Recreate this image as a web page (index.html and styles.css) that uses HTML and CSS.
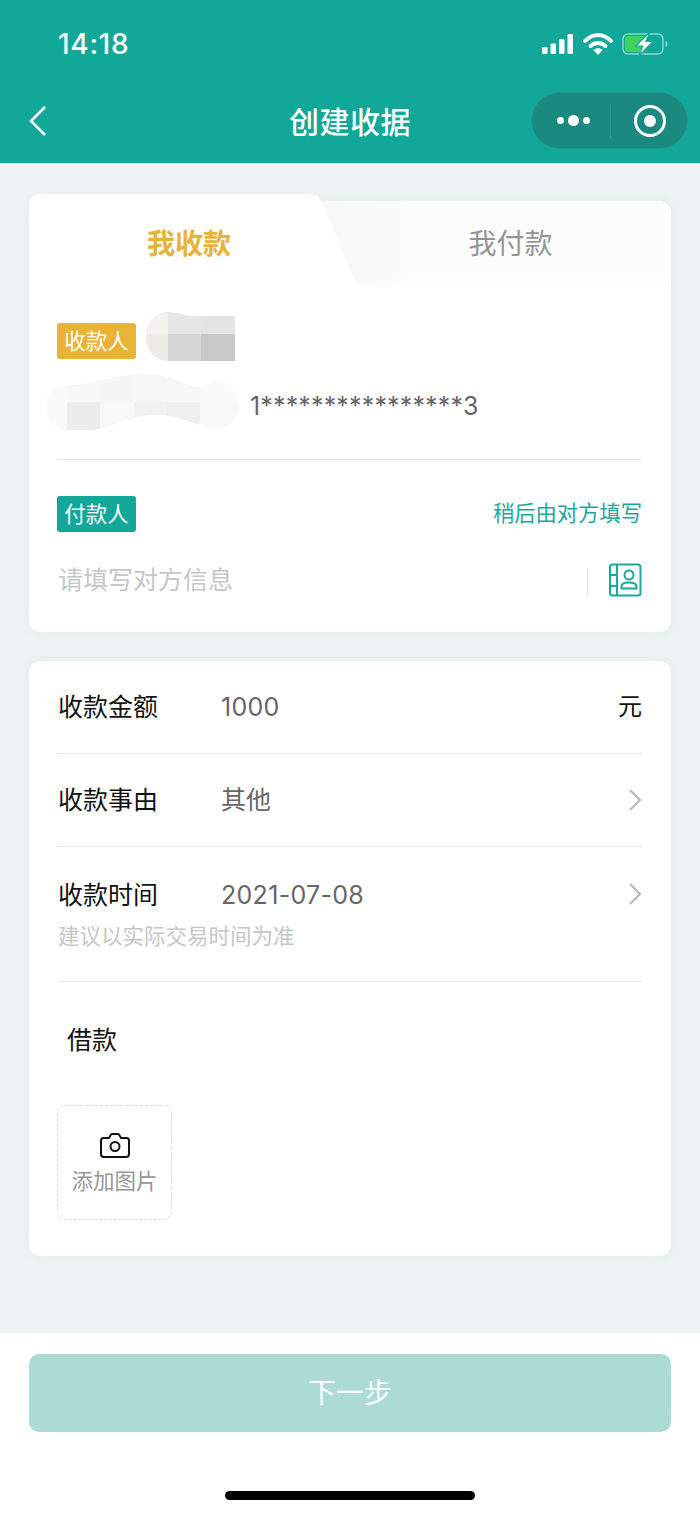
FILE: index.html
```html
<!DOCTYPE html>
<html lang="zh">
<head>
<meta charset="utf-8">
<title>创建收据</title>
<link rel="stylesheet" href="styles.css">
</head>
<body>
<div class="page">
  <header class="header">
    <div class="status">
      <span class="time">14:18</span>
      <div class="status-icons">
        <svg width="32" height="22" viewBox="0 0 32 22"><g fill="#fff"><rect x="0" y="14" width="5.500" height="7" rx="1.200"/><rect x="8.500" y="10.500" width="5.500" height="10.500" rx="1.200"/><rect x="17" y="6" width="5.500" height="15" rx="1.200"/><rect x="25.500" y="1" width="5.500" height="20" rx="1.200"/></g></svg>
        <svg width="30" height="24" viewBox="0 0 30 24"><path d="M2 9C10 1 20 1 28 9" fill="none" stroke="#fff" stroke-width="3.800" stroke-linecap="round"/><path d="M7.500 14C12 10 18 10 22.500 14" fill="none" stroke="#fff" stroke-width="3.800" stroke-linecap="round"/><path d="M10.500 18C13.500 15.500 16.500 15.500 19.500 18L15 23Z" fill="#fff"/></svg>
        <svg width="46" height="24" viewBox="0 0 46 24"><rect x="1" y="2" width="40" height="20" rx="5" fill="none" stroke="#8fd6cd" stroke-width="1.500"/><rect x="3" y="4" width="21" height="16" rx="3" fill="#3cd25c"/><path d="M43.500 9v6c1.500-.5 2-1.500 2-3s-.5-2.500-2-3Z" fill="#8fd6cd"/><path d="M28 0 13.500 14H20.500L17 24 31 9.500H24Z" fill="#fff" stroke="#11a899" stroke-width="1.200"/></svg>
      </div>
    </div>
    <div class="nav">
      <svg class="back" width="20" height="32" viewBox="0 0 20 32"><path d="M17 2 3 16l14 14" fill="none" stroke="#fff" stroke-width="2.600"/></svg>
      <h1 class="title">创建收据</h1>
      <div class="capsule">
        <div class="capsule-dots"><i class="dot"></i><i class="dot dot-big"></i><i class="dot"></i></div>
        <i class="capsule-line"></i>
        <div class="capsule-target"><i class="target-core"></i></div>
      </div>
    </div>
  </header>

  <main class="content">
    <section class="card parties">
      <div class="tabs">
        <div class="tab tab-on">我收款</div>
        <div class="tab tab-off">我付款</div>
      </div>
      <svg class="active-tab" width="380" height="94" viewBox="0 0 380 94">
        <defs><linearGradient id="tabfade" x1="0" y1="0" x2="1" y2="0"><stop offset="0" stop-color="#e9e9e4" stop-opacity=".25"/><stop offset="1" stop-color="#e9e9e4" stop-opacity="0"/></linearGradient></defs>
        <path d="M293 7H380V94H328Z" fill="url(#tabfade)"/>
        <path d="M0 94V12Q0 0 12 0H280Q290 0 293 9L325 86Q328 93 334 94Z" fill="#fff"/>
      </svg>
      <div class="party party-top">
        <div class="party-head">
          <span class="tag tag-gold">收款人</span>
          <svg class="blur blur-name" width="90" height="50" viewBox="0 0 90 50">
            <defs><clipPath id="clipname"><path d="M0 24C0 8 10 0 22 0C32 0 38 4 48 4H89V49H22C10 49 0 40 0 24Z"/></clipPath></defs>
            <g clip-path="url(#clipname)">
              <rect x="0" y="0" width="22" height="22" fill="#f3f2ee"/><rect x="22" y="0" width="33" height="22" fill="#e6e6e6"/><rect x="55" y="0" width="34" height="22" fill="#e4e4e4"/>
              <rect x="0" y="22" width="22" height="27" fill="#edebe6"/><rect x="22" y="22" width="33" height="27" fill="#d6d6d6"/><rect x="55" y="22" width="34" height="27" fill="#c9c9c9"/>
            </g>
          </svg>
        </div>
        <div class="party-account">
          <svg class="blur blur-long" width="195" height="57" viewBox="0 0 195 57">
            <defs><clipPath id="cliplong"><path d="M0 34C0 18 10 11 24 11C50 11 68 0 100 0C130 0 140 13 155 13C165 8 172 8 176 8C186 8 194 20 194 32C194 46 184 54 172 54C152 54 140 41 110 41C80 41 70 56 44 56H24C10 56 0 48 0 34Z"/></clipPath></defs>
            <g clip-path="url(#cliplong)">
              <rect x="0" y="0" width="22" height="28" fill="#fbfbfb"/><rect x="22" y="0" width="33" height="28" fill="#f7f7f7"/><rect x="55" y="0" width="34" height="28" fill="#f5f5f5"/><rect x="89" y="0" width="33" height="28" fill="#f6f6f6"/><rect x="122" y="0" width="33" height="28" fill="#f7f7f7"/><rect x="155" y="0" width="40" height="28" fill="#fafafa"/>
              <rect x="0" y="28" width="22" height="29" fill="#fbfbfb"/><rect x="22" y="28" width="33" height="29" fill="#ececec"/><rect x="55" y="28" width="34" height="29" fill="#f8f8f8"/><rect x="89" y="28" width="33" height="29" fill="#f2f2f2"/><rect x="122" y="28" width="33" height="29" fill="#efefef"/><rect x="155" y="28" width="40" height="29" fill="#f8f8f8"/>
            </g>
          </svg>
          <span class="account">1****************3</span>
        </div>
      </div>
      <div class="party party-bottom">
        <div class="party-row">
          <span class="tag tag-teal">付款人</span>
          <span class="later">稍后由对方填写</span>
        </div>
        <div class="party-row party-input">
          <span class="placeholder">请填写对方信息</span>
          <div class="contact">
            <i class="contact-line"></i>
            <svg width="34" height="34" viewBox="0 0 34 34"><g fill="none" stroke="#17a99b" stroke-width="2"><rect x="2" y="1.500" width="30.500" height="31" rx="2.500"/><path d="M9 1.500v31M2 12h7M2 23h7"/><circle cx="21" cy="12" r="4.500"/><path d="M13.500 25.500v-2c0-2.500 3-4 7.500-4s7.500 1.500 7.500 4v2Z"/></g></svg>
          </div>
        </div>
      </div>
    </section>

    <section class="card form">
      <div class="row">
        <span class="label">收款金额</span>
        <span class="value value-num">1000</span>
        <span class="unit">元</span>
      </div>
      <div class="row">
        <span class="label">收款事由</span>
        <span class="value">其他</span>
        <svg class="chevron" width="14" height="24" viewBox="0 0 14 24"><path d="m2 2 10 10L2 22" fill="none" stroke="#b9b9b9" stroke-width="2.200"/></svg>
      </div>
      <div class="row row-tall">
        <div class="row-main">
          <span class="label">收款时间</span>
          <span class="value value-num">2021-07-08</span>
          <svg class="chevron" width="14" height="24" viewBox="0 0 14 24"><path d="m2 2 10 10L2 22" fill="none" stroke="#b9b9b9" stroke-width="2.200"/></svg>
        </div>
        <p class="hint">建议以实际交易时间为准</p>
      </div>
      <div class="notes">
        <p class="note-text">借款</p>
        <div class="upload">
          <svg width="30" height="26" viewBox="0 0 30 26"><g fill="none" stroke="#111" stroke-width="2"><path d="M3.500 6H9l2-3.500Q11.500 2 12.500 2h5q1 0 1.500.5L21 6h5.500Q29 6 29 8.500V22q0 3-3 3H4q-3 0-3-3V8.500Q1 6 3.500 6Z"/><circle cx="15" cy="14.500" r="4.500"/></g></svg>
          <span class="upload-text">添加图片</span>
        </div>
      </div>
    </section>
  </main>

  <footer class="footer">
    <button class="next">下一步</button>
    <i class="home"></i>
  </footer>
</div>
</body>
</html>
```

FILE: styles.css
```css
* { box-sizing: border-box; }
html, body { margin: 0; padding: 0; }
body {
  font-family: "Noto Sans CJK SC", "Noto Sans", sans-serif;
  background: #ecf3f2;
}
i { display: block; }
p, h1 { margin: 0; font-weight: 400; }

.page {
  width: 700px;
  height: 1515px;
  display: flex;
  flex-direction: column;
  overflow: hidden;
}

/* header */
.header {
  height: 163px;
  background: #11a899;
  flex: none;
}
.status {
  height: 90px;
  padding: 28px 32px 0 58px;
  display: flex;
  justify-content: space-between;
  align-items: flex-start;
}
.time {
  font: 500 28px/33px Inter, "Liberation Sans", sans-serif;
  color: #fff;
  letter-spacing: .7px;
}
.status-icons {
  display: flex;
  align-items: center;
  gap: 9px;
  height: 32px;
}
.nav {
  height: 62px;
  display: flex;
  align-items: center;
  justify-content: center;
  padding-bottom: 2px;
  position: relative;
}
.back { position: absolute; left: 28px; top: 15px; }
.title {
  font-size: 30px;
  font-weight: 500;
  line-height: 40px;
  color: #fff;
  letter-spacing: .5px;
  margin-bottom: 1px;
}
.capsule {
  position: absolute;
  left: 531px;
  top: 2px;
  width: 157px;
  height: 57px;
  border-radius: 29px;
  background: #1a8a81;
  border: 1px solid #24978d;
  display: flex;
  align-items: center;
}
.capsule-dots {
  width: 78px;
  padding-left: 4px;
  display: flex;
  align-items: center;
  justify-content: center;
  gap: 4px;
}
.dot { width: 7px; height: 7px; border-radius: 50%; background: #fff; }
.dot-big { width: 11px; height: 11px; }
.capsule-line { width: 1px; height: 34px; background: #2b9b91; }
.capsule-target {
  width: 32px;
  height: 32px;
  margin-left: 23px;
  border: 3.500px solid #fff;
  border-radius: 50%;
  display: flex;
  align-items: center;
  justify-content: center;
}
.target-core { width: 12px; height: 12px; border-radius: 50%; background: #fff; }

/* content */
.content {
  flex: 1;
  padding: 38px 29px 0;
  display: flex;
  flex-direction: column;
  gap: 29px;
}
.card {
  background: #fff;
  border-radius: 12px;
  box-shadow: 0 0 10px rgba(200, 215, 212, .25);
}
.parties { height: 431px; position: relative; }
.tabs {
  height: 86px;
  display: grid;
  grid-template-columns: 321px 321px;
  background: linear-gradient(180deg, #fcfcfc 88%, #ffffff 100%);
  border-radius: 12px 12px 0 0;
}
.active-tab { position: absolute; left: 0; top: -7px; z-index: 1; }
.tab {
  font-size: 28px;
  line-height: 82px;
  text-align: center;
  position: relative;
  z-index: 2;
}
.tab-on {
  color: #e8b336;
  font-weight: 700;
  padding-right: 1px;
}
.tab-off { color: #959595; }

.party { padding: 0 29px; position: relative; z-index: 2; }
.party-top {
  height: 173px;
  margin: 0 29px;
  padding: 0;
  border-bottom: 1px solid #e5e5e5;
}
.party-head {
  height: 65px;
  padding-top: 36px;
  position: relative;
}
.tag {
  display: block;
  width: 79px;
  height: 36px;
  margin-left: -1px;
  border-radius: 3px;
  color: #fff;
  font-size: 21.500px;
  line-height: 34px;
  text-align: center;
}
.tag-gold { background: #e8b336; }
.tag-teal { background: #11a899; }
.blur { position: absolute; display: block; }
.blur-name { left: 88px; top: 25px; }
.party-account {
  position: relative;
  height: 56px;
  margin-top: 26px;
  padding-left: 192px;
  display: flex;
  align-items: center;
}
.blur-long { left: -13px; top: -4px; }
.account {
  font: 400 25px/32px Inter, "Liberation Sans", sans-serif;
  color: #666;
  letter-spacing: .15px;
  position: relative;
  white-space: nowrap;
}
.party-bottom { padding-top: 34px; }
.party-row {
  display: flex;
  justify-content: space-between;
  align-items: center;
}
.later {
  font-size: 21.300px;
  line-height: 36px;
  color: #17a99b;
  margin-bottom: 4px;
}
.party-input { height: 36px; margin-top: 28px; }
.placeholder {
  font-size: 25px;
  line-height: 36px;
  color: #c6c6c6;
  margin-bottom: 5px;
}
.contact { display: flex; align-items: center; gap: 20px; }
.contact-line { width: 1px; height: 28px; background: #e8e8e8; margin-top: 4px; }

/* form */
.form { height: 595px; }
.row {
  height: 93px;
  margin: 0 29px;
  display: flex;
  align-items: center;
  border-bottom: 1px solid #e3e5e5;
}
.row-tall {
  height: 135px;
  display: block;
  padding-top: 25px;
}
.row-main { display: flex; align-items: center; height: 46px; }
.label {
  width: 163px;
  font-size: 25px;
  line-height: 36px;
  color: #111;
  margin-bottom: 4px;
}
.value {
  flex: 1;
  font-size: 25px;
  line-height: 36px;
  color: #666;
  margin-bottom: 4px;
}
.value-num {
  font-family: Inter, "Liberation Sans", sans-serif;
  letter-spacing: .3px;
  margin-bottom: 1px;
}
.unit { font-size: 24px; line-height: 36px; color: #111; margin-bottom: 4px; }
.row-main .chevron { margin-bottom: 2px; }
.hint {
  font-size: 21.500px;
  line-height: 30px;
  color: #c6c6c6;
  margin-top: 2px;
}
.notes { padding: 38px 29px 0; }
.note-text {
  font-size: 25px;
  line-height: 36px;
  color: #111;
  padding-left: 9px;
}
.upload {
  width: 115px;
  height: 115px;
  margin: 49px 0 0 -1px;
  border: 1.500px dashed #dcdcdc;
  border-radius: 8px;
  display: flex;
  flex-direction: column;
  align-items: center;
  padding-top: 26px;
  gap: 6px;
}
.upload-text { font-size: 21.500px; line-height: 32px; color: #979797; }

/* footer */
.footer {
  height: 182px;
  flex: none;
  background: #fff;
  padding: 21px 29px 0;
  display: flex;
  flex-direction: column;
  align-items: center;
}
.next {
  width: 642px;
  height: 78px;
  border: 0;
  border-radius: 10px;
  background: #acdad5;
  color: #fff;
  font: 400 28px/74px "Noto Sans CJK SC", "Noto Sans", sans-serif;
  padding: 0 0 4px;
}
.home {
  width: 250px;
  height: 9px;
  margin-top: 59px;
  border-radius: 5px;
  background: #000;
}
```
